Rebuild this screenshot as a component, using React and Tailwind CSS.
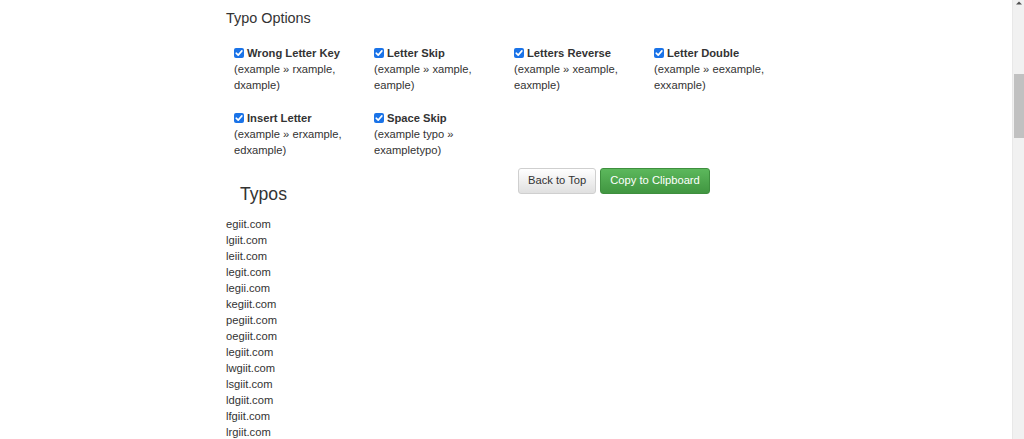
import React from "react";

const options = [
  ["Wrong Letter Key", "(example » rxample,", "dxample)"],
  ["Letter Skip", "(example » xample,", "eample)"],
  ["Letters Reverse", "(example » xeample,", "eaxmple)"],
  ["Letter Double", "(example » eexample,", "exxample)"],
  ["Insert Letter", "(example » erxample,", "edxample)"],
  ["Space Skip", "(example typo »", "exampletypo)"],
];

const typos = [
  "egiit.com",
  "lgiit.com",
  "leiit.com",
  "legit.com",
  "legii.com",
  "kegiit.com",
  "pegiit.com",
  "oegiit.com",
  "legiit.com",
  "lwgiit.com",
  "lsgiit.com",
  "ldgiit.com",
  "lfgiit.com",
  "lrgiit.com",
];

function Check() {
  return (
    <span className="inline-flex h-[10px] w-[10px] shrink-0 items-center justify-center rounded-[2px] bg-[#1a73e8]">
      <svg viewBox="0 0 10 10" className="h-[10px] w-[10px]">
        <path d="M2.2 5.2 L4.2 7.1 L7.9 2.9" fill="none" stroke="white" strokeWidth="1.6" strokeLinecap="round" strokeLinejoin="round" />
      </svg>
    </span>
  );
}

export default function App() {
  return (
    <div
      className="relative h-[439px] w-[1024px] overflow-hidden bg-white text-[#333]"
      style={{ fontFamily: '"Liberation Sans", Arial, Helvetica, sans-serif' }}
    >
      <div className="w-[1012px] pl-[226px]">
        <h2 className="pt-[11px] text-[14.4px] leading-[1.1] font-normal">Typo Options</h2>
        <div className="mt-[18px] grid grid-cols-[140px_140px_140px_140px] gap-y-[17px] pl-[8px] text-[11.2px] leading-[16px]">
          {options.map(([title, l1, l2]) => (
            <div key={title}>
              <div className="flex items-center gap-[3px]">
                <Check />
                <span className="font-bold">{title}</span>
              </div>
              <div>{l1}</div>
              <div>{l2}</div>
            </div>
          ))}
        </div>
        <div className="flex items-start">
          <div className="w-[292px]">
            <h3 className="mt-[27px] pl-[14px] text-[17.6px] leading-[1.1] font-normal">Typos</h3>
            <div className="mt-[12px] text-[11.2px] leading-[16px]">
              {typos.map((t) => (
                <div key={t}>{t}</div>
              ))}
            </div>
          </div>
          <div className="mt-[10px] flex gap-[4px] text-[11.2px]">
            <button className="h-[26px] rounded-[3px] border border-[#cfcfcf] bg-gradient-to-b from-white to-[#e0e0e0] px-[9px] text-[#333]">
              Back to Top
            </button>
            <button className="h-[26px] rounded-[3px] border border-[#3e8f3e] bg-gradient-to-b from-[#5cb85c] to-[#419641] px-[9px] text-white">
              Copy to Clipboard
            </button>
          </div>
        </div>
      </div>
      <div className="absolute right-0 top-0 h-[439px] w-[12px] border-l border-[#e8e8e8] bg-[#f1f1f1]">
        <svg viewBox="0 0 12 6" className="absolute left-0 top-0 h-[6px] w-[12px]">
          <path d="M3 4.5 L6 1.5 L9 4.5 Z" fill="#505050" />
        </svg>
        <div className="absolute left-[1px] top-[74px] h-[64px] w-[10px] bg-[#c1c1c1]" />
      </div>
    </div>
  );
}
